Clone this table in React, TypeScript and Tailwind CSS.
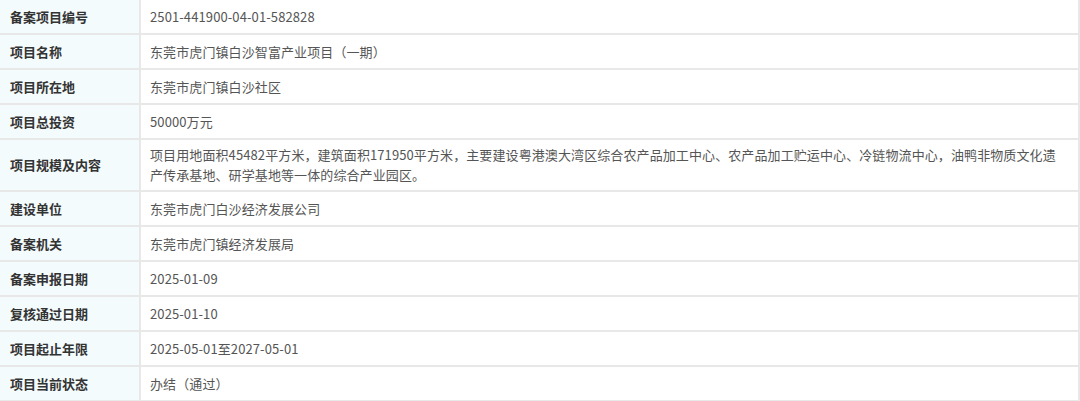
const rows: { label: string; value: string; tall?: boolean }[] = [
  { label: "备案项目编号", value: "2501-441900-04-01-582828" },
  { label: "项目名称", value: "东莞市虎门镇白沙智富产业项目（一期）" },
  { label: "项目所在地", value: "东莞市虎门镇白沙社区" },
  { label: "项目总投资", value: "50000万元" },
  {
    label: "项目规模及内容",
    value:
      "项目用地面积45482平方米，建筑面积171950平方米，主要建设粤港澳大湾区综合农产品加工中心、农产品加工贮运中心、冷链物流中心，油鸭非物质文化遗产传承基地、研学基地等一体的综合产业园区。",
    tall: true,
  },
  { label: "建设单位", value: "东莞市虎门白沙经济发展公司" },
  { label: "备案机关", value: "东莞市虎门镇经济发展局" },
  { label: "备案申报日期", value: "2025-01-09" },
  { label: "复核通过日期", value: "2025-01-10" },
  { label: "项目起止年限", value: "2025-05-01至2027-05-01" },
  { label: "项目当前状态", value: "办结（通过）" },
];

export default function App() {
  return (
    <div
      className="w-[1080px] h-[401px] bg-white overflow-hidden text-[13px]"
      style={{ fontFamily: '"Microsoft YaHei", "Noto Sans CJK SC", sans-serif' }}
    >
      <div className="border-r-2 border-[#e8e8e8]">
        {rows.map((r) => (
          <div
            key={r.label}
            className={`grid grid-cols-[141px_1fr] border-b-2 border-[#e8e8e8] ${r.tall ? "h-[52px]" : "h-[35px]"}`}
          >
            <div className="flex items-center bg-[#f3fbfd] border-r-2 border-[#e8e8e8] pl-[10px] font-bold text-[#333]">
              {r.label}
            </div>
            <div className="flex items-center pl-[9px] pr-[15px] text-[#555] leading-[20px] tracking-[0.1px]">
              {r.value}
            </div>
          </div>
        ))}
      </div>
    </div>
  );
}
